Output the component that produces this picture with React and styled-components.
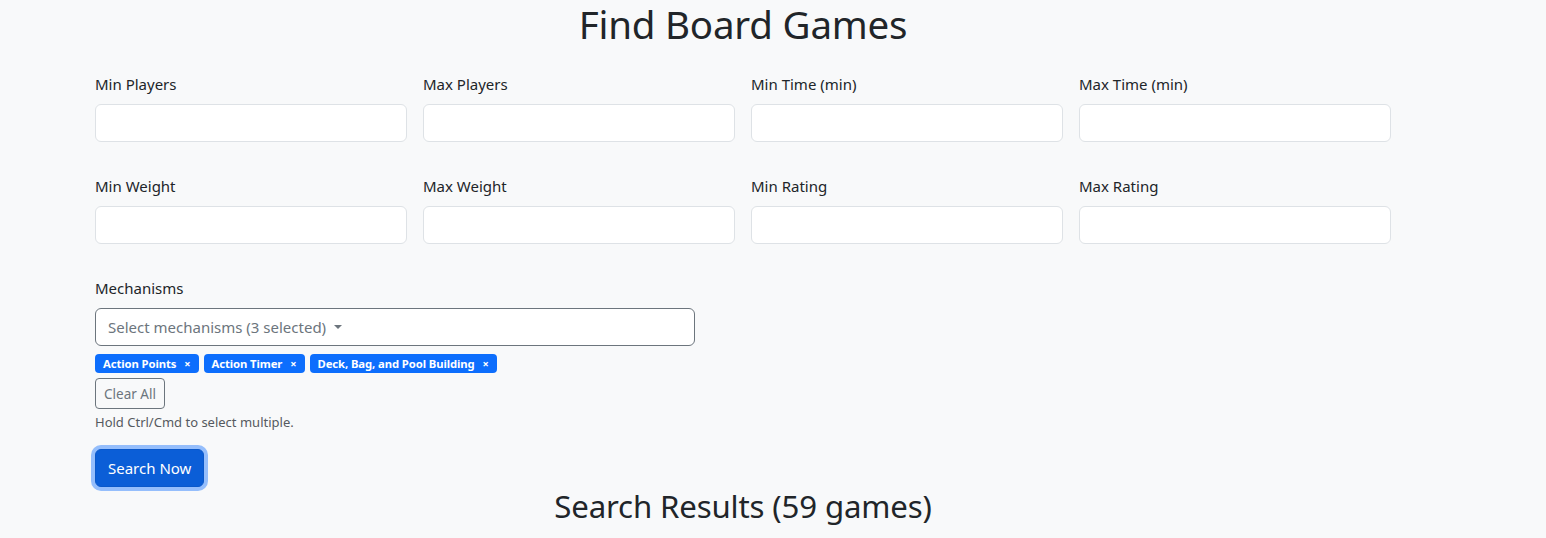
import React from "react";
import styled, { createGlobalStyle } from "styled-components";

const Global = createGlobalStyle`
  html, body { margin: 0; padding: 0; background: #f8f9fa; }
  body { font-family: "Noto Sans", "Open Sans", sans-serif; color: #212529; }
  * { box-sizing: border-box; }
`;

const Container = styled.div`
  width: 1320px;
  margin-left: 83px;
  padding: 0 12px;
`;

const Title = styled.h1`
  margin: 0 0 24px;
  font-size: 38.5px;
  font-weight: 400;
  line-height: 48px;
  text-align: center;
  letter-spacing: -0.2px;
`;

const Grid = styled.div`
  display: grid;
  grid-template-columns: repeat(4, 312px);
  column-gap: 16px;
  row-gap: 32px;
  margin-bottom: 32px;
`;

const Field = styled.div`
  display: flex;
  flex-direction: column;
`;

const Label = styled.label`
  font-size: 15px;
  line-height: 24px;
  margin-bottom: 8px;
`;

const Input = styled.input`
  height: 38px;
  width: 100%;
  border: 1px solid #dee2e6;
  border-radius: 6px;
  background: #fff;
  font: inherit;
  padding: 6px 12px;
`;

const Select = styled.div`
  width: 600px;
  height: 38px;
  border: 1px solid #6c757d;
  border-radius: 6px;
  background: #fff;
  display: flex;
  align-items: center;
  padding: 0 12px;
  font-size: 15px;
  color: #6c757d;
  gap: 8px;
`;

const Caret = styled.span`
  width: 0;
  height: 0;
  border-left: 4px solid transparent;
  border-right: 4px solid transparent;
  border-top: 4px solid #6c757d;
`;

const Tags = styled.div`
  display: flex;
  gap: 5px;
  margin-top: 8px;
`;

const Tag = styled.span`
  display: inline-flex;
  align-items: center;
  height: 19px;
  padding: 0 8px;
  background: #0d6efd;
  color: #fff;
  border-radius: 4px;
  font-size: 11.3px;
  font-weight: 700;
  gap: 8px;
  letter-spacing: -0.1px;
`;

const X = styled.span`
  font-size: 11px;
  font-weight: 700;
`;

const ClearBtn = styled.button`
  display: block;
  margin-top: 5px;
  height: 31px;
  padding: 0 8px;
  border: 1px solid #6c757d;
  border-radius: 4px;
  background: transparent;
  color: #6c757d;
  font-family: inherit;
  font-size: 13.5px;
`;

const Help = styled.div`
  font-size: 13px;
  line-height: 21px;
  margin-top: 3px;
  color: #555a60;
`;

const SearchBtn = styled.button`
  display: block;
  margin-top: 16px;
  height: 38px;
  padding: 0 12px;
  border: 1px solid #0a58ca;
  border-radius: 6px;
  background: #0b5ed7;
  color: #fff;
  font-family: inherit;
  font-size: 15px;
  box-shadow: 0 0 0 4px rgba(49, 132, 253, 0.5);
`;

const Results = styled.h2`
  margin: 0;
  font-size: 31.2px;
  font-weight: 400;
  line-height: 38px;
  text-align: center;
  letter-spacing: -0.15px;
`;

const fields = [
  "Min Players", "Max Players", "Min Time (min)", "Max Time (min)",
  "Min Weight", "Max Weight", "Min Rating", "Max Rating",
];

const tags = ["Action Points", "Action Timer", "Deck, Bag, and Pool Building"];

export default function App() {
  return (
    <>
      <Global />
      <Container>
        <Title>Find Board Games</Title>
        <Grid>
          {fields.map((f) => (
            <Field key={f}>
              <Label>{f}</Label>
              <Input />
            </Field>
          ))}
        </Grid>
        <Field>
          <Label>Mechanisms</Label>
          <Select>
            Select mechanisms (3 selected) <Caret />
          </Select>
        </Field>
        <Tags>
          {tags.map((t) => (
            <Tag key={t}>
              {t} <X>×</X>
            </Tag>
          ))}
        </Tags>
        <ClearBtn>Clear All</ClearBtn>
        <Help>Hold Ctrl/Cmd to select multiple.</Help>
        <SearchBtn>Search Now</SearchBtn>
        <Results>Search Results (59 games)</Results>
      </Container>
    </>
  );
}
